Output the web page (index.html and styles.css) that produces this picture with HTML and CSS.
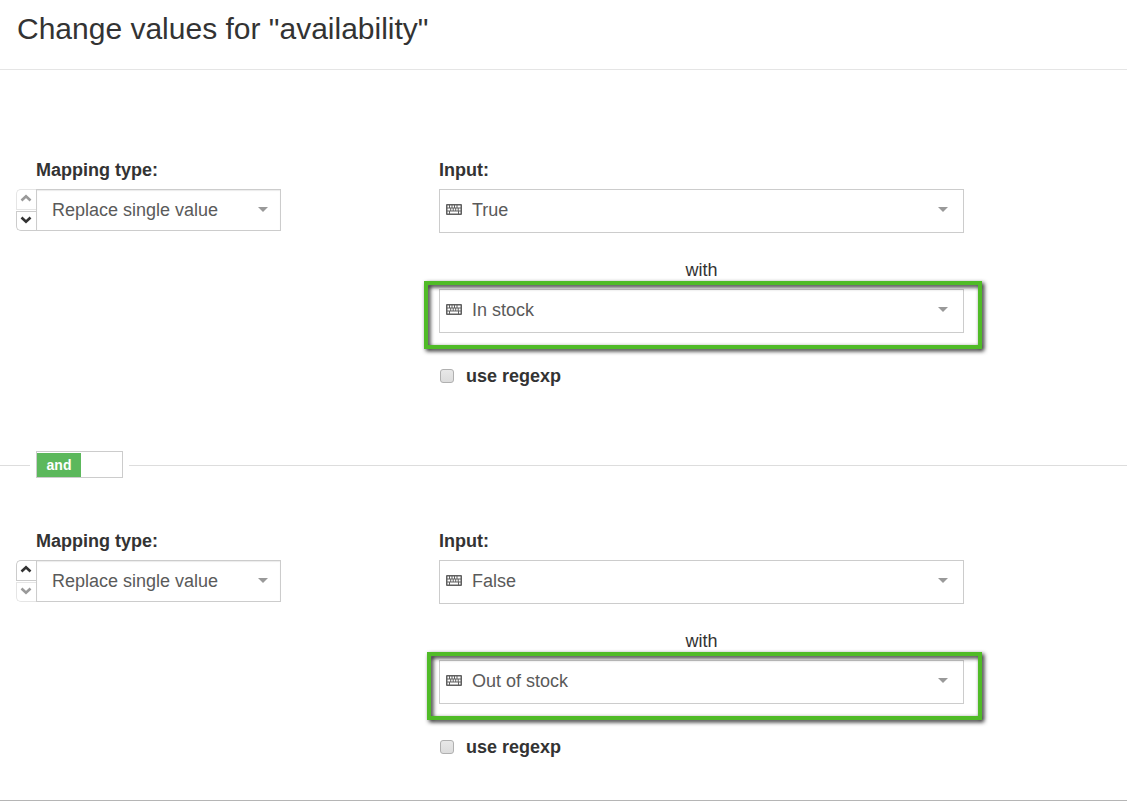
FILE: index.html
```html
<!DOCTYPE html>
<html lang="en">
<head>
  <meta charset="UTF-8">
  <meta name="viewport" content="width=device-width, initial-scale=1.0">
  <title>Change values</title>
  <link rel="stylesheet" href="styles.css">
</head>
<body>
  <!-- Icons shared by the rows -->
  <svg class="icon-defs" aria-hidden="true">
    <symbol id="icon-keyboard" viewBox="0 0 16 11">
      <path fill="#606060" fill-rule="evenodd" d="M1 0h14a1 1 0 0 1 1 1v9a1 1 0 0 1-1 1H1a1 1 0 0 1-1-1V1a1 1 0 0 1 1-1zM1.500 1.500v2h1.500v-2zM4 1.500v2h1.500v-2zM6.500 1.500v2H8v-2zM9 1.500v2h1.500v-2zM11.500 1.500v2h3v-2zM1.500 4.500v2h2.700v-2zM5.200 4.500v2h1.500v-2zM7.700 4.500v2h1.500v-2zM10.200 4.500v2h1.500v-2zM12.700 4.500v2h1.800v-2zM1.500 7.500v2h1.500v-2zM4 7.500v2h8v-2zM13 7.500v2h1.500v-2z"/>
    </symbol>
    <symbol id="icon-up" viewBox="0 0 12 8">
      <path d="M1.500 6.500L6 2.200l4.500 4.300" fill="none" stroke="currentColor" stroke-width="2.600"/>
    </symbol>
    <symbol id="icon-down" viewBox="0 0 12 8">
      <path d="M1.500 1.500L6 5.800l4.500-4.300" fill="none" stroke="currentColor" stroke-width="2.600"/>
    </symbol>
  </svg>

  <header class="page-header">
    <h1>Change values for "availability"</h1>
  </header>

  <main>
    <!-- First mapping -->
    <section class="mapping">
      <div class="mapping-type">
        <label class="field-label" for="type1">Mapping type:</label>
        <div class="type-row">
          <div class="order">
            <button type="button" aria-label="Move up" disabled><svg><use href="#icon-up"/></svg></button>
            <button type="button" aria-label="Move down"><svg><use href="#icon-down"/></svg></button>
          </div>
          <div class="select-box type-select">
            <select id="type1"><option>Replace single value</option></select>
          </div>
        </div>
      </div>
      <div class="mapping-input">
        <label class="field-label" for="input1">Input:</label>
        <div class="select-box value-select">
          <svg class="keyboard"><use href="#icon-keyboard"/></svg>
          <select id="input1"><option>True</option></select>
        </div>
        <label class="with" for="output1">with</label>
        <div class="select-box value-select highlight">
          <svg class="keyboard"><use href="#icon-keyboard"/></svg>
          <select id="output1"><option>In stock</option></select>
        </div>
        <label class="regexp"><input type="checkbox"> use regexp</label>
      </div>
    </section>

    <!-- and / or switch -->
    <div class="joiner">
      <button type="button" class="toggle"><span>and</span></button>
    </div>

    <!-- Second mapping -->
    <section class="mapping last">
      <div class="mapping-type">
        <label class="field-label" for="type2">Mapping type:</label>
        <div class="type-row">
          <div class="order">
            <button type="button" aria-label="Move up"><svg><use href="#icon-up"/></svg></button>
            <button type="button" aria-label="Move down" disabled><svg><use href="#icon-down"/></svg></button>
          </div>
          <div class="select-box type-select">
            <select id="type2"><option>Replace single value</option></select>
          </div>
        </div>
      </div>
      <div class="mapping-input">
        <label class="field-label" for="input2">Input:</label>
        <div class="select-box value-select">
          <svg class="keyboard"><use href="#icon-keyboard"/></svg>
          <select id="input2"><option>False</option></select>
        </div>
        <label class="with" for="output2">with</label>
        <div class="select-box value-select highlight highlight-narrow">
          <svg class="keyboard"><use href="#icon-keyboard"/></svg>
          <select id="output2"><option>Out of stock</option></select>
        </div>
        <label class="regexp"><input type="checkbox"> use regexp</label>
      </div>
    </section>
  </main>
</body>
</html>
```

FILE: styles.css
```css
* {
  box-sizing: border-box;
}

body {
  margin: 0;
  background-color: #fff;
  color: #333;
  font-family: "Liberation Sans", Arial, sans-serif;
  font-size: 18px;
  line-height: 24px;
}

button,
select {
  font-family: inherit;
}

.icon-defs {
  display: none;
}

.page-header {
  padding: 11px 17px 22px;
  border-bottom: 1px solid #e5e5e5;
}
.page-header h1 {
  margin: 0;
  font-size: 30px;
  font-weight: normal;
  line-height: 36px;
}

/* Mapping rows */
.mapping {
  display: grid;
  grid-template-columns: 423fr 525fr 163fr;
  padding: 88px 0 63px 16px;
}
.mapping.last {
  padding-top: 51px;
  padding-bottom: 41px;
  border-bottom: 1px solid #b5b5b5;
}

.field-label {
  display: block;
  margin-bottom: 7px;
  font-weight: bold;
}
.mapping-type .field-label {
  margin-left: 20px;
}

.type-row {
  display: flex;
}

.order {
  display: flex;
  flex-direction: column;
  gap: 1px;
  width: 20px;
}
.order button {
  display: flex;
  flex: 1;
  align-items: center;
  justify-content: center;
  padding: 0 1px 2px 0;
  border: 1px solid #ccc;
  border-right: none;
  background-color: #fff;
  color: #333;
}
.order button:first-child {
  border-top-left-radius: 5px;
}
.order button:last-child {
  border-bottom-left-radius: 5px;
}
.order button:disabled {
  border-color: #e5e5e5;
  color: #999;
}
.order svg {
  width: 12px;
  height: 8px;
}

/* Selects */
.select-box {
  position: relative;
}
.select-box select {
  display: block;
  width: 100%;
  height: 44px;
  padding: 0 40px 2px 32px;
  appearance: none;
  border: 1px solid #ccc;
  border-radius: 0;
  background-color: #fff;
  color: #5a5a5a;
  font-size: 18px;
}
.select-box::after {
  content: "";
  position: absolute;
  top: 18px;
  right: 16px;
  border: 5px solid transparent;
  border-top-color: #999;
  border-bottom: none;
  pointer-events: none;
}

.type-select {
  width: 245px;
}
.type-select::after {
  right: 13px;
}
.type-select select {
  height: 42px;
  padding-left: 15px;
  padding-bottom: 0;
  box-shadow: inset 0 1px 1px rgba(0, 0, 0, 0.08);
}

.keyboard {
  position: absolute;
  top: 15px;
  left: 7px;
  width: 16px;
  height: 11px;
  pointer-events: none;
}

.with {
  display: block;
  margin: 25px 0 7px;
  text-align: center;
}

/* Green frame drawn over the select */
.highlight::before {
  content: "";
  position: absolute;
  z-index: 1;
  inset: -8px -18px -16px -15px;
  border: 4px solid #50bb27;
  filter: drop-shadow(2px 2px 2px rgba(0, 0, 0, 0.9));
  pointer-events: none;
}
.highlight-narrow::before {
  left: -12px;
}

.regexp {
  display: flex;
  align-items: center;
  gap: 12px;
  margin-top: 31px;
  font-weight: bold;
}
.regexp input {
  width: 14px;
  height: 14px;
  margin: 0 0 0 1px;
  appearance: none;
  border: 1px solid #b0b0b0;
  border-radius: 3px;
  background: linear-gradient(#e8e8e8, #dcdcdc);
}
.regexp input:checked {
  background: #5cb85c;
}

/* Line with the and / or switch */
.joiner {
  display: flex;
  align-items: center;
  gap: 6px;
}
.joiner::before,
.joiner::after {
  content: "";
  height: 2px;
  border-bottom: 1px solid #ddd;
}
.joiner::before {
  width: 30px;
}
.joiner::after {
  flex: 1;
}
.toggle {
  width: 87px;
  height: 27px;
  padding: 1px 0 0;
  border: 1px solid #ccc;
  background-color: #fff;
  text-align: left;
}
.toggle span {
  display: block;
  width: 44px;
  background-color: #5cb85c;
  color: #fff;
  font-size: 14px;
  font-weight: bold;
  line-height: 24px;
  text-align: center;
}
```
